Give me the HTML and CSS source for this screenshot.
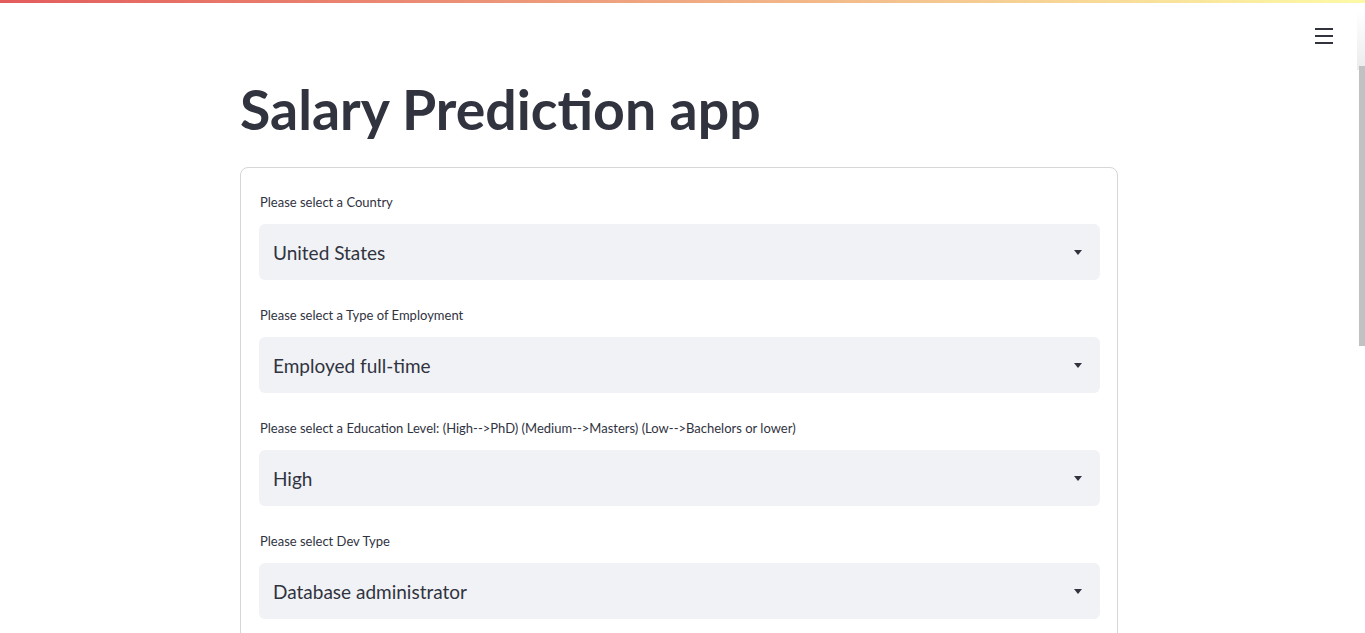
FILE: index.html
```html
<!DOCTYPE html>
<html>
<head>
<meta charset="utf-8">
<link rel="stylesheet" href="styles.css">
</head>
<body>
<div class="decoration"></div>
<button class="menu" aria-label="menu">
  <svg width="18" height="16" viewBox="0 0 18 16"><rect x="0" y="0" width="18" height="2" fill="#31333f"/><rect x="0" y="7" width="18" height="2" fill="#31333f"/><rect x="0" y="14" width="18" height="2" fill="#31333f"/></svg>
</button>
<div class="scroll-shadow"></div>
<div class="scroll-thumb"></div>
<main class="main">
  <div class="block">
    <h1 class="title">Salary Prediction app</h1>
    <form class="form">
      <div class="field">
        <label class="label">Please select a Country</label>
        <div class="select"><span>United States</span><svg class="caret" width="8" height="5" viewBox="0 0 8 5"><path d="M0 0h8L4 5z" fill="#31333f"/></svg></div>
      </div>
      <div class="field">
        <label class="label">Please select a Type of Employment</label>
        <div class="select"><span>Employed full-time</span><svg class="caret" width="8" height="5" viewBox="0 0 8 5"><path d="M0 0h8L4 5z" fill="#31333f"/></svg></div>
      </div>
      <div class="field">
        <label class="label">Please select a Education Level: (High--&gt;PhD) (Medium--&gt;Masters) (Low--&gt;Bachelors or lower)</label>
        <div class="select"><span>High</span><svg class="caret" width="8" height="5" viewBox="0 0 8 5"><path d="M0 0h8L4 5z" fill="#31333f"/></svg></div>
      </div>
      <div class="field">
        <label class="label">Please select Dev Type</label>
        <div class="select"><span>Database administrator</span><svg class="caret" width="8" height="5" viewBox="0 0 8 5"><path d="M0 0h8L4 5z" fill="#31333f"/></svg></div>
      </div>
    </form>
  </div>
</main>
</body>
</html>
```
FILE: styles.css
```css
html, body {
  margin: 0;
  padding: 0;
  height: 633px;
  overflow: hidden;
  background: #ffffff;
  font-family: Lato, "Noto Sans", sans-serif;
  color: #31333f;
}
.decoration {
  height: 3px;
  background: linear-gradient(90deg, #e35c5c, #f2b98a 60%, #fdfaa6);
}
.menu {
  position: absolute;
  top: 28px;
  left: 1315px;
  padding: 0;
  border: 0;
  background: transparent;
  line-height: 0;
}
.scroll-shadow {
  position: absolute;
  top: 10px;
  right: 0;
  width: 8px;
  height: 60px;
  background: linear-gradient(180deg, rgba(0,0,0,0), rgba(0,0,0,0.08));
}
.scroll-thumb {
  position: absolute;
  top: 66px;
  right: 0;
  width: 6px;
  height: 280px;
  background: #c1c1c1;
}
.main {
  width: 1358px;
  display: flex;
  justify-content: center;
}
.block {
  width: 878px;
  padding-top: 73px;
}
.title {
  margin: 0;
  font-size: 55.4px;
  font-weight: 700;
  line-height: 66px;
  color: #31333f;
}
.form {
  margin-top: 25px;
  border: 1px solid rgba(49, 51, 63, 0.2);
  border-radius: 8px;
  padding: 26px 17px 60px 18px;
  display: flex;
  flex-direction: column;
  gap: 27px;
}
.field {
  display: flex;
  flex-direction: column;
  gap: 14px;
}
.label {
  font-size: 13px;
  line-height: 16px;
  color: #31333f;
  padding-left: 1px;
}
.select {
  height: 56px;
  background: #f0f2f6;
  border-radius: 6px;
  display: flex;
  align-items: center;
  justify-content: space-between;
  padding: 0 18px 0 14px;
  font-size: 19px;
}
.caret {
  display: block;
}
```
